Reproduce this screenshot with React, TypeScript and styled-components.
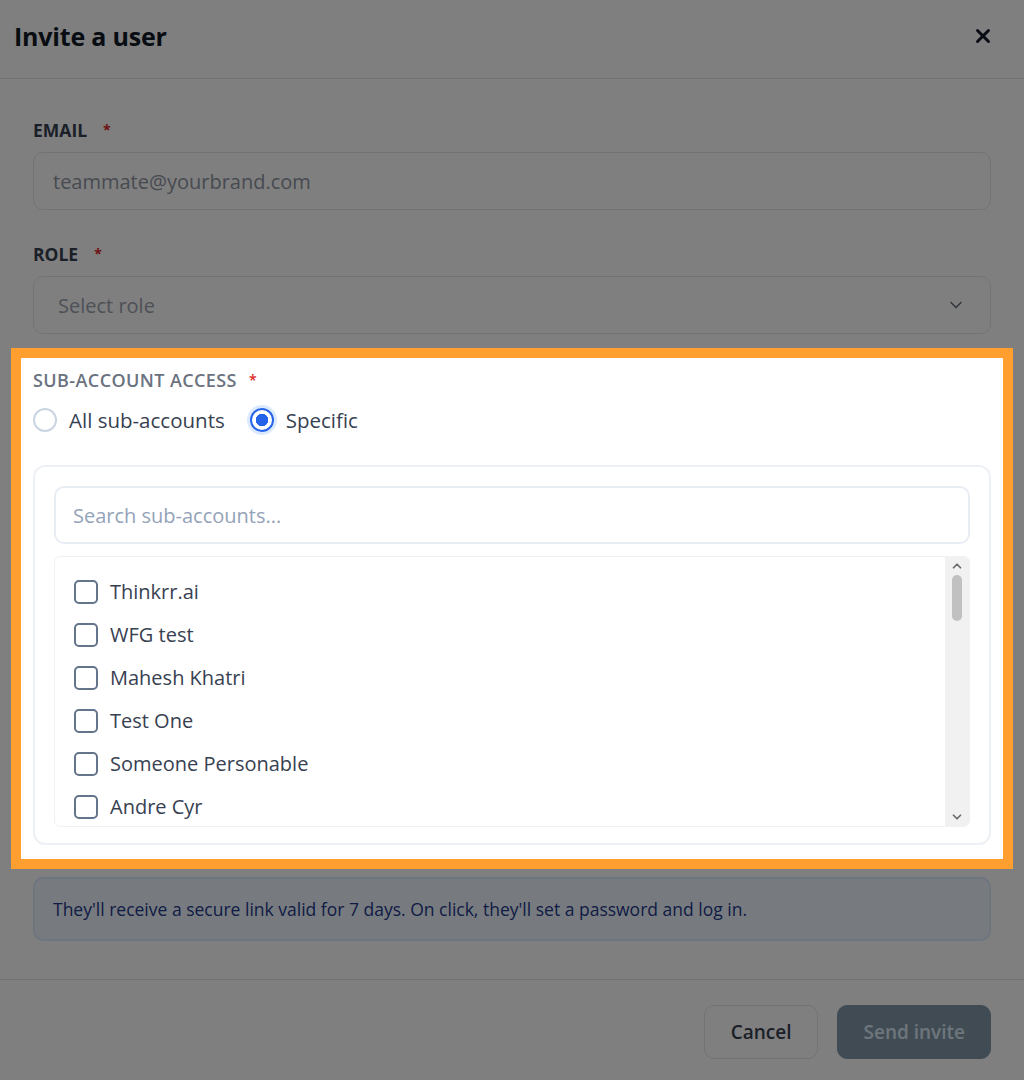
import React from 'react';
import styled, {createGlobalStyle} from 'styled-components';
import {X, ChevronDown, ChevronUp} from 'lucide-react';

const GlobalStyle = createGlobalStyle`
  html, body { margin: 0; padding: 0; background: #ffffff; }
  body { font-family: "Open Sans", "Noto Sans", sans-serif; color: #111827; }
  * { box-sizing: border-box; }
`;

const Page = styled.div`position: relative; width: 1024px; height: 1080px; overflow: hidden; background: #fff;`;
const Overlay = styled.div`position: absolute; inset: 0; background: rgba(0, 0, 0, 0.5); z-index: 1;`;

const Header = styled.div`
  height: 79px; display: flex; align-items: center; justify-content: space-between;
  padding: 0 30px 6px 14px; border-bottom: 1px solid #e5e7eb;`;
const Title = styled.h2`margin: 0; font-size: 25px; font-weight: 700; color: #111827; letter-spacing: -0.2px;`;
const Close = styled.button`border: 0; background: none; padding: 0; display: flex; color: #111827;`;

const Body = styled.div`padding: 41px 33px 38px; display: flex; flex-direction: column; border-bottom: 1px solid #e5e7eb;`;
const Field = styled.div`display: flex; flex-direction: column; gap: 12px; margin-bottom: ${p => p.$mb ?? 0}px;`;
const Label = styled.div`
  font-size: ${p => p.$muted ? 18 : 17.5}px; line-height: 20px; font-weight: ${p => p.$muted ? 600 : 700};
  color: ${p => p.$muted ? '#6b7280' : '#374151'}; text-transform: uppercase;
  letter-spacing: ${p => p.$muted ? 0.4 : 0}px;
  span { color: #dc2626; margin-left: ${p => p.$muted ? 12 : 16}px; font-size: 14px; vertical-align: top; }`;
const Input = styled.div`
  height: 58px; border: 1.5px solid #e5e7eb; border-radius: 10px; display: flex; align-items: center;
  justify-content: space-between; padding: 0 24px 0 19px; font-size: 20px; color: ${p => p.$color ?? '#9ca3af'};`;

const Highlight = styled.section`
  position: relative; z-index: 2; background: #fff; padding-bottom: 2px; margin-bottom: 30px;
  box-shadow: 0 0 0 12px #fff, 0 0 0 22px #ff9f2f;`;
const RadioRow = styled.div`height: 24px; display: flex; align-items: center; gap: 25px; margin: 18px 0 33px;`;
const RadioOption = styled.label`display: flex; align-items: center; gap: 12px; font-size: 20.5px; color: #374151;`;
const RadioDot = styled.span`
  width: 24px; height: 24px; border-radius: 50%; display: inline-block;
  border: 2px solid ${p => p.$on ? '#2563eb' : '#cbd5e1'};
  background: ${p => p.$on ? 'radial-gradient(circle, #2563eb 0 6px, #fff 6.5px)' : '#fff'};
  box-shadow: ${p => p.$on ? '0 0 0 3px #dbeafe' : 'none'};`;

const Picker = styled.div`
  border: 2px solid #edf0f4; border-radius: 12px; padding: 19px 19px 16px;
  display: flex; flex-direction: column; gap: 12px;`;
const Search = styled.div`
  height: 58px; border: 2px solid #e8edf3; border-radius: 10px; display: flex; align-items: center;
  padding: 0 17px; font-size: 20px; color: #94a3b8;`;
const ListBox = styled.div`height: 271px; border: 1.5px solid #eef1f5; border-radius: 6px; display: flex; overflow: hidden;`;
const Rows = styled.div`flex: 1; padding: 13px 0 0 19px; overflow: hidden;`;
const Row = styled.div`height: 43px; display: flex; align-items: center; gap: 12px; font-size: 20px; color: #374151;`;
const Box = styled.span`width: 24px; height: 24px; border: 2px solid #64748b; border-radius: 5px; flex: none;`;
const Scrollbar = styled.div`
  width: 24px; background: #f1f1f1; display: flex; flex-direction: column; align-items: center;
  padding: 2px 0; color: #6b6b6b;`;
const Thumb = styled.div`width: 10px; height: 46px; border-radius: 5px; background: #c1c1c1; margin: 2px 0 auto;`;

const Info = styled.div`
  height: 64px; border: 2px solid #dbeafe; background: #eff6ff; border-radius: 10px;
  display: flex; align-items: center; padding: 0 18px; font-size: 17.5px; color: #1e3a8a; white-space: nowrap;`;

const Footer = styled.div`display: flex; justify-content: flex-end; gap: 19px; padding: 25px 33px 0;`;
const Button = styled.button`
  height: 54px; padding: 0 ${p => p.$primary ? 25 : 26}px; border-radius: 10px; font: inherit; font-size: 19px;
  font-weight: 600; border: 1.5px solid ${p => p.$primary ? '#8296a6' : '#e5e7eb'};
  background: ${p => p.$primary ? '#8296a6' : '#fff'}; color: ${p => p.$primary ? '#dcecf8' : '#374151'};`;

const accounts = ['Thinkrr.ai', 'WFG test', 'Mahesh Khatri', 'Test One', 'Someone Personable', 'Andre Cyr'];

export default function App() {
    return (
        <Page>
            <GlobalStyle/>
            <Header>
                <Title>Invite a user</Title>
                <Close><X size={22} strokeWidth={3.2}/></Close>
            </Header>
            <Body>
                <Field $mb={34}>
                    <Label>Email<span>*</span></Label>
                    <Input $color="#8f96a3">teammate@yourbrand.com</Input>
                </Field>
                <Field $mb={36}>
                    <Label>Role<span>*</span></Label>
                    <Input style={{paddingLeft: 24}}>Select role<ChevronDown size={20} color="#6b7280"/></Input>
                </Field>
                <Highlight>
                    <Label $muted>Sub-account access<span>*</span></Label>
                    <RadioRow>
                        <RadioOption><RadioDot/>All sub-accounts</RadioOption>
                        <RadioOption><RadioDot $on/>Specific</RadioOption>
                    </RadioRow>
                    <Picker>
                        <Search>Search sub-accounts...</Search>
                        <ListBox>
                            <Rows>
                                {accounts.map(name => (
                                    <Row key={name}><Box/>{name}</Row>
                                ))}
                            </Rows>
                            <Scrollbar>
                                <ChevronUp size={14} strokeWidth={3}/>
                                <Thumb/>
                                <ChevronDown size={14} strokeWidth={3}/>
                            </Scrollbar>
                        </ListBox>
                    </Picker>
                </Highlight>
                <Info>They'll receive a secure link valid for 7 days. On click, they'll set a password and log in.</Info>
            </Body>
            <Footer>
                <Button>Cancel</Button>
                <Button $primary>Send invite</Button>
            </Footer>
            <Overlay/>
        </Page>
    );
}
